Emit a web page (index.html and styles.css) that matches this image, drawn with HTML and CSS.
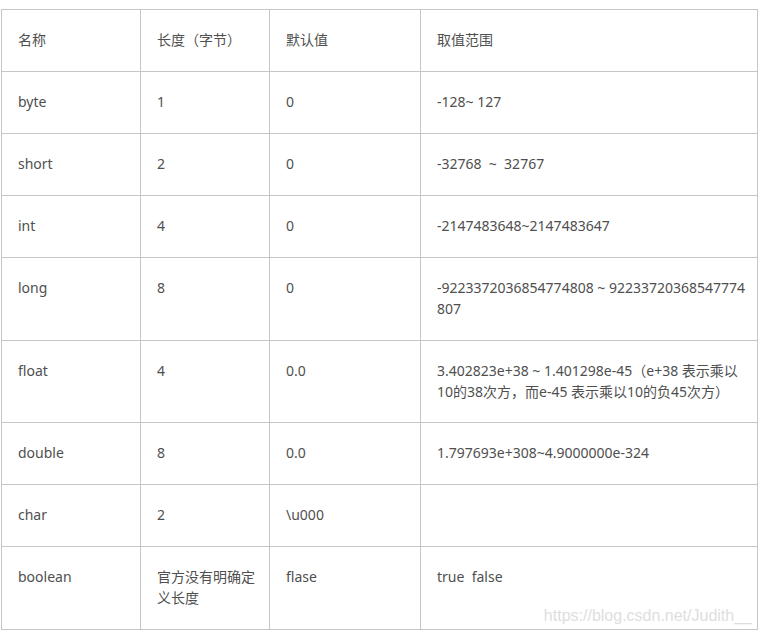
FILE: index.html
```html
<!DOCTYPE html>
<html lang="zh-CN">
<head>
<meta charset="utf-8">
<title>Java 基本数据类型</title>
<link rel="stylesheet" href="styles.css">
</head>
<body>
<div class="wrap">
<table class="types">
  <colgroup>
    <col class="c-name">
    <col class="c-len">
    <col class="c-def">
    <col class="c-range">
  </colgroup>
  <tr><td>名称</td><td>长度（字节）</td><td>默认值</td><td>取值范围</td></tr>
  <tr><td>byte</td><td>1</td><td>0</td><td>-128~ 127</td></tr>
  <tr><td>short</td><td>2</td><td>0</td><td>-32768 &nbsp;~ &nbsp;32767</td></tr>
  <tr><td>int</td><td>4</td><td>0</td><td>-2147483648~2147483647</td></tr>
  <tr><td>long</td><td>8</td><td>0</td><td>-9223372036854774808 ~ 92233720368547774<br>807</td></tr>
  <tr class="tight"><td>float</td><td>4</td><td>0.0</td><td>3.402823e+38 ~ 1.401298e-45（e+38 表示乘以<br>10的38次方，而e-45 表示乘以10的负45次方）</td></tr>
  <tr><td>double</td><td>8</td><td>0.0</td><td>1.797693e+308~4.9000000e-324</td></tr>
  <tr><td>char</td><td>2</td><td>\u000</td><td></td></tr>
  <tr><td>boolean</td><td>官方没有明确定<br>义长度</td><td>flase</td><td>true &nbsp;false</td></tr>
</table>
<span class="watermark">https://blog.csdn.net/Judith__</span>
</div>
</body>
</html>
```

FILE: styles.css
```css
html, body {
  margin: 0;
  padding: 0;
  background: #ffffff;
}

.wrap {
  position: relative;
  padding: 9px 0 0 1px;
  width: 757px;
}

.types {
  border-collapse: separate;
  border-spacing: 0;
  table-layout: fixed;
  width: 757px;
  border-left: 1px solid #c6c6c6;
  border-top: 1px solid #c6c6c6;
  font-family: "Noto Sans", "Noto Sans CJK SC", sans-serif;
  font-size: 14px;
  line-height: 21px;
  color: #4f4f4f;
}

.c-name { width: 139px; }
.c-len { width: 129px; }
.c-def { width: 151px; }
.c-range { width: 337px; }

.types td {
  padding: 19px 8px 21px 16px;
  border-right: 1px solid #c6c6c6;
  border-bottom: 1px solid #c6c6c6;
  vertical-align: top;
  white-space: nowrap;
  text-align: left;
}

.types .tight td {
  padding-bottom: 20px;
}

.watermark {
  position: absolute;
  right: 6px;
  bottom: 5px;
  font-family: "Liberation Sans", Arial, sans-serif;
  font-size: 16px;
  line-height: 18px;
  color: #dedede;
}
```
